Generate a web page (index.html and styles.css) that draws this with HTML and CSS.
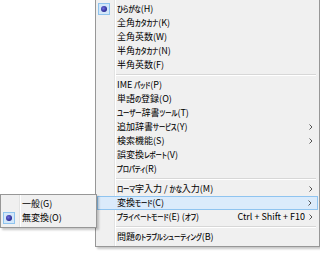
FILE: index.html
```html
<!DOCTYPE html>
<html lang="ja">
<head>
    <meta charset="UTF-8">
    <title>IME メニュー</title>
    <link rel="stylesheet" href="styles.css">
</head>
<body>
    <div class="desk">
        <div class="menu main">
            <div class="item checked"><span class="ico"><i class="dot"></i></span><span class="label"><span class="k">ひらがな</span>(H)</span></div>
            <div class="item"><span class="ico"></span><span class="label">全角<span class="k">カタカナ</span>(K)</span></div>
            <div class="item"><span class="ico"></span><span class="label">全角英数(W)</span></div>
            <div class="item"><span class="ico"></span><span class="label">半角<span class="k">カタカナ</span>(N)</span></div>
            <div class="item"><span class="ico"></span><span class="label">半角英数(F)</span></div>
            <div class="sep"></div>
            <div class="item"><span class="ico"></span><span class="label">IME <span class="k">パッド</span>(P)</span></div>
            <div class="item"><span class="ico"></span><span class="label">単語<span class="k">の</span>登録(O)</span></div>
            <div class="item"><span class="ico"></span><span class="label"><span class="k">ユーザー</span>辞書<span class="k">ツール</span>(T)</span></div>
            <div class="item"><span class="ico"></span><span class="label">追加辞書<span class="k">サービス</span>(Y)</span><span class="arrow"><svg width="4" height="6" viewBox="0 0 4 6"><path d="M0.5 0.5 L3 3 L0.5 5.5" fill="none" stroke="#555" stroke-width="1"/></svg></span></div>
            <div class="item"><span class="ico"></span><span class="label">検索機能(S)</span><span class="arrow"><svg width="4" height="6" viewBox="0 0 4 6"><path d="M0.5 0.5 L3 3 L0.5 5.5" fill="none" stroke="#555" stroke-width="1"/></svg></span></div>
            <div class="item"><span class="ico"></span><span class="label">誤変換<span class="k">レポート</span>(V)</span></div>
            <div class="item"><span class="ico"></span><span class="label"><span class="k">プロパティ</span>(R)</span></div>
            <div class="sep"></div>
            <div class="item"><span class="ico"></span><span class="label"><span class="k">ローマ</span>字入力 / <span class="k">かな</span>入力(M)</span><span class="arrow"><svg width="4" height="6" viewBox="0 0 4 6"><path d="M0.5 0.5 L3 3 L0.5 5.5" fill="none" stroke="#555" stroke-width="1"/></svg></span></div>
            <div class="item hover"><span class="ico"></span><span class="label">変換<span class="k">モード</span>(C)</span><span class="arrow"><svg width="4" height="6" viewBox="0 0 4 6"><path d="M0.5 0.5 L3 3 L0.5 5.5" fill="none" stroke="#555" stroke-width="1"/></svg></span></div>
            <div class="item"><span class="ico"></span><span class="label"><span class="k">プライベートモード</span>(E) (<span class="k">オフ</span>)</span><span class="keys">Ctrl + Shift + F10</span><span class="arrow"><svg width="4" height="6" viewBox="0 0 4 6"><path d="M0.5 0.5 L3 3 L0.5 5.5" fill="none" stroke="#555" stroke-width="1"/></svg></span></div>
            <div class="sep"></div>
            <div class="item"><span class="ico"></span><span class="label">問題<span class="k">のトラブルシューティング</span>(B)</span></div>
        </div>

        <div class="menu sub">
            <div class="item"><span class="ico"></span><span class="label">一般(G)</span></div>
            <div class="item checked"><span class="ico"><i class="dot"></i></span><span class="label">無変換(O)</span></div>
        </div>
    </div>
</body>
</html>
```

FILE: styles.css
```css
:root {
    --menu-bg: #f0f0f0;
    --menu-border: #979797;
    --sep-dark: #d7d7d7;
    --hl-bg: #dbebfb;
    --hl-border: #8fc4f0;
}

body {
    margin: 0;
    background: #ffffff;
    font-family: "Noto Sans CJK JP", sans-serif;
    font-size: 9px;
    color: #000;
}

.desk {
    position: relative;
    width: 320px;
    height: 257px;
    overflow: hidden;
}

.menu {
    box-sizing: border-box;
    border: 1px solid var(--menu-border);
    padding: 2px 1px;
    background:
        linear-gradient(to right, transparent 18px, #e2e3e3 18px, #e2e3e3 19px, #fff 19px, #fff 20px, transparent 20px),
        var(--menu-bg);
    box-shadow: 2px 2px 2px rgba(0, 0, 0, 0.22);
}

.main {
    margin: -1px 0 0 95px;
    width: 225px;
}

/* flyout for 変換モード */
.sub {
    position: absolute;
    left: 0;
    top: 194px;
    width: 97px;
}

.item {
    box-sizing: border-box;
    display: flex;
    align-items: center;
    height: 14px;
    line-height: 14px;
    white-space: nowrap;
}

.item.hover {
    background: var(--hl-bg);
    border: 1px solid var(--hl-border);
}

.item.hover .ico {
    margin-left: 0;
}

.ico {
    box-sizing: border-box;
    display: flex;
    align-items: center;
    justify-content: center;
    width: 12px;
    height: 12px;
    margin-left: 1px;
    flex: none;
}

.checked .ico {
    background: #d3e7f9;
    border: 1px solid #8ec3ee;
}

.dot {
    width: 6px;
    height: 6px;
    border-radius: 50%;
    background: radial-gradient(circle at 40% 40%, #6f6fe0, #23238a 75%);
}

.label {
    margin-left: 7px;
    flex: 1;
}

/* kana runs: the UI font draws them narrow, so set them small and stretch them back up */
.k {
    display: inline-block;
    font-size: 6.3px;
    line-height: 7px;
    font-feature-settings: "palt";
    -webkit-text-stroke: 0.15px #000;
    transform: scaleY(1.3);
    transform-origin: 50% 85%;
}

.keys {
    margin-right: 4px;
}

.arrow {
    display: flex;
    width: 4px;
    margin-right: 5px;
}

.sep {
    height: 6px;
    margin: 0 2px 0 19px;
    background: linear-gradient(to bottom, transparent 2px, var(--sep-dark) 2px, var(--sep-dark) 3px, #fff 3px, #fff 4px, transparent 4px);
}
```
